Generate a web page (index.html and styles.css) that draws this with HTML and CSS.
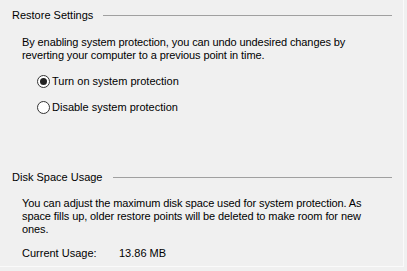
FILE: index.html
```html
<!DOCTYPE html>
<html lang="en">
<head>
    <meta charset="UTF-8">
    <title>System Protection</title>
    <link rel="stylesheet" href="styles.css">
</head>
<body>
    <div class="frame">
        <div class="group">
            <div class="legend"><span>Restore Settings</span><div class="rule"></div></div>
            <p class="text">By enabling system protection, you can undo undesired changes by<br>reverting your computer to a previous point in time.</p>
            <label class="radio">
                <input type="radio" name="protect" checked>
                <span class="dot"></span>
                Turn on system protection
            </label>
            <label class="radio">
                <input type="radio" name="protect">
                <span class="dot"></span>
                Disable system protection
            </label>
        </div>

        <div class="group disk">
            <div class="legend"><span>Disk Space Usage</span><div class="rule"></div></div>
            <p class="text">You can adjust the maximum disk space used for system protection. As<br>space fills up, older restore points will be deleted to make room for new<br>ones.</p>
            <div class="usage">
                <span class="usage-label">Current Usage:</span>
                <span>13.86 MB</span>
            </div>
        </div>
    </div>
</body>
</html>
```

FILE: styles.css
```css
body {
    margin: 0;
    background-color: #f0f0f0;
    font-family: "Liberation Sans", Arial, sans-serif;
    font-size: 11px;
    line-height: 13px;
    color: #000;
}
.frame {
    width: 404px;
    height: 267px;
    box-sizing: border-box;
    border-right: 1px solid #fafafa;
    border-bottom: 1px solid #fafafa;
    padding-top: 9px;
}
.group {
    padding: 0 11px 0 12px;
}
.legend {
    display: flex;
    align-items: center;
    gap: 10px;
    white-space: nowrap;
}
.rule {
    flex: 1;
    border-top: 1px solid #a0a0a0;
}
.text {
    margin: 14px 0 0 10px;
    white-space: nowrap;
    letter-spacing: -0.1px;
}
.radio {
    display: flex;
    align-items: center;
    gap: 2px;
    height: 14px;
    margin: 12px 0 0 25px;
    white-space: nowrap;
}
.radio input {
    display: none;
}
.dot {
    position: relative;
    width: 11px;
    height: 11px;
    border: 1px solid #333;
    border-radius: 50%;
    background-color: white;
}
input:checked + .dot:before {
    position: absolute;
    content: "";
    width: 7px;
    height: 7px;
    left: 2px;
    top: 2px;
    border-radius: 50%;
    background-color: #222;
}
.disk {
    margin-top: 57px;
}
.disk .text {
    margin-top: 13px;
}
.usage {
    display: flex;
    margin: 11px 0 0 10px;
    white-space: nowrap;
}
.usage-label {
    width: 97px;
}
```
